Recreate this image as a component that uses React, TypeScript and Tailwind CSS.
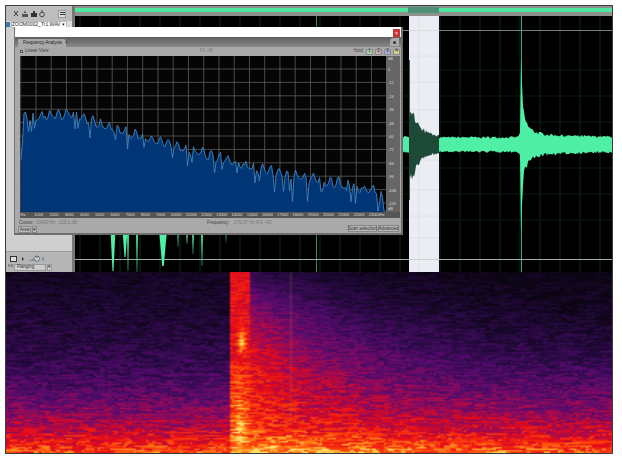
import { useEffect, useMemo, useRef } from "react";

function rng(seed: number) {
  let s = seed;
  return () => {
    s = (s * 16807) % 2147483647;
    return s / 2147483647;
  };
}

const green = "#4ff0a6";
const hz = ["Hz", "1000", "2000", "3000", "4000", "5000", "6000", "7000", "8000", "9000", "10000", "11000", "12000", "13000", "14000", "15000", "16000", "17000", "18000", "19000", "20000", "21000", "22000", "23000", "Hz"];
const db = ["dB", "0", "-12", "-24", "-36", "-48", "-60", "-72", "-84", "-96", "-108", "-120", "dB"];

// below-the-dialog peaks: x, width, tip y
const lowerPeaks = [
  [113, 5, 271], [125, 5, 257], [128, 2, 271], [137, 2, 272], [163, 8, 266],
  [178, 1.5, 247], [187, 2, 244], [193, 2, 254], [202, 2, 266], [226, 1, 243],
];

function wavePath(seed: number, from: number, to: number, amp: (x: number) => number) {
  const r = rng(seed);
  const top: string[] = [];
  const bottom: string[] = [];
  for (let x = from; x <= to; x += 1) {
    const a = amp(x);
    top.push(`${x},${(144 - a * (0.8 + r() * 0.3)).toFixed(1)}`);
    bottom.unshift(`${x},${(145 + a * (0.8 + r() * 0.3)).toFixed(1)}`);
  }
  return `M${top.join("L")}L${bottom.join("L")}Z`;
}

function Waveform() {
  const paths = useMemo(() => {
    const spike = (x: number) => {
      const d = x - 521;
      if (d < 0) return 7 + 8 * Math.exp(d / 1.5);
      return 7.5 + 58 * Math.exp(-d / 0.9) + 28 * Math.exp(-d / 5) + 6 * Math.exp(-d / 28);
    };
    const decay = (x: number) => {
      const d = x - 409;
      return 6 + 34 * Math.exp(-d / 7) * Math.min(1, 0.55 + d / 6) + 8 * Math.exp(-d / 22);
    };
    return {
      right: wavePath(7, 439, 612, spike),
      left: wavePath(11, 403, 409, () => 8),
      selected: wavePath(23, 409, 439, decay),
    };
  }, []);

  const verticals = Array.from({ length: 28 }, (_, i) => 80 + i * 20);
  return (
    <svg width="537" height="256" viewBox="75 16 537 256" className="block">
      <rect x="75" y="16" width="537" height="256" fill="#000" />
      {verticals.map((x) => (
        <line key={x} x1={x} y1="16" x2={x} y2="272" stroke="#0f2a1c" strokeWidth="1" />
      ))}
      {[70, 96, 122, 168, 194, 220].map((y) => (
        <line key={y} x1="75" y1={y} x2="612" y2={y} stroke="#0c1a14" strokeWidth="1" />
      ))}
      <line x1="316.5" y1="16" x2="316.5" y2="272" stroke="#2f8a62" strokeWidth="1" />
      <line x1="521.5" y1="16" x2="521.5" y2="272" stroke="#3aa878" strokeWidth="1" />
      <rect x="409" y="16" width="30" height="256" fill="#ecedf3" />
      {[56, 82, 110, 136, 160, 190, 216, 238].map((y) => (
        <line key={y} x1="409" y1={y} x2="439" y2={y} stroke="#e0e2e6" strokeWidth="1" />
      ))}
      <line x1="419" y1="16" x2="419" y2="272" stroke="#e0e2e6" strokeWidth="1" />
      <line x1="409.5" y1="60" x2="409.5" y2="200" stroke="#3b6a55" strokeWidth="1" />
      <line x1="75" y1="30.5" x2="612" y2="30.5" stroke="#77807b" strokeWidth="1" />
      <line x1="75" y1="259.5" x2="612" y2="259.5" stroke="#a6aca8" strokeWidth="1" />
      <line x1="409" y1="30.5" x2="439" y2="30.5" stroke="#dcdee2" strokeWidth="1" />
      <line x1="409" y1="259.5" x2="439" y2="259.5" stroke="#cfd1d5" strokeWidth="1" />
      <path d={paths.right} fill={green} />
      <path d={paths.left} fill={green} />
      <path d={paths.selected} fill="#1d4a37" />
      {lowerPeaks.map(([x, w, tip]) => (
        <path key={x} d={`M${x - w / 2},230L${x + w / 2},230L${x + w * 0.1},${tip}L${x - w * 0.1},${tip}Z`} fill={green} />
      ))}
    </svg>
  );
}

function Spectrum() {
  const { fill, stroke } = useMemo(() => {
    const r = rng(91);
    const env: [number, number][] = [
      [21, 132], [24, 113], [40, 111], [75, 109], [100, 120], [150, 134], [200, 148],
      [250, 162], [300, 172], [350, 181], [378, 187], [384, 198], [386, 208],
    ];
    const level = (x: number) => {
      for (let i = 1; i < env.length; i += 1) {
        if (x <= env[i][0]) {
          const [x0, y0] = env[i - 1];
          const [x1, y1] = env[i];
          return y0 + ((y1 - y0) * (x - x0)) / (x1 - x0);
        }
      }
      return 208;
    };
    const pts: string[] = [];
    for (let x = 21; x <= 386; x += 1.5) {
      const comb = Math.abs(Math.sin(x / 2.7 + r() * 0.6));
      const dip = r() > 0.86 ? 8 + r() * 14 : 0;
      const y = level(x) + comb * 10 + r() * 3 + dip - 3;
      pts.push(`${x},${Math.min(y, 211).toFixed(1)}`);
    }
    return { stroke: `M${pts.join("L")}`, fill: `M21,212L${pts.join("L")}L386,212Z` };
  }, []);

  return (
    <svg width="366" height="156" viewBox="20 56 366 156" className="block">
      <rect x="20" y="56" width="366" height="156" fill="#050505" />
      {Array.from({ length: 12 }, (_, i) => 69 + i * 13.4).map((y) => (
        <line key={y} x1="20" y1={y} x2="386" y2={y} stroke="#5c5c5c" strokeWidth="0.8" />
      ))}
      {Array.from({ length: 24 }, (_, i) => 20.7 + i * 15.25).map((x) => (
        <line key={x} x1={x} y1="56" x2={x} y2="212" stroke="#5c5c5c" strokeWidth="0.8" />
      ))}
      <path d={fill} fill="#003676" />
      <path d={stroke} fill="none" stroke="#3f86c4" strokeWidth="0.9" />
    </svg>
  );
}

function colour(v: number): [number, number, number] {
  const stops: [number, number, number, number][] = [
    [0, 10, 5, 16],
    [0.16, 36, 10, 62],
    [0.34, 84, 12, 110],
    [0.5, 150, 10, 90],
    [0.66, 232, 12, 24],
    [0.8, 255, 70, 10],
    [0.92, 255, 170, 40],
    [1, 255, 225, 110],
  ];
  const c = Math.min(1, Math.max(0, v));
  for (let i = 1; i < stops.length; i += 1) {
    if (c <= stops[i][0]) {
      const a = stops[i - 1];
      const b = stops[i];
      const k = (c - a[0]) / (b[0] - a[0]);
      return [a[1] + (b[1] - a[1]) * k, a[2] + (b[2] - a[2]) * k, a[3] + (b[3] - a[3]) * k];
    }
  }
  return [255, 225, 110];
}

function Spectrogram() {
  const ref = useRef<HTMLCanvasElement>(null);
  useEffect(() => {
    const ctx = ref.current?.getContext("2d");
    if (!ctx) return;
    const r = rng(1234);
    const W = 303;
    const H = 120;
    for (let y = 0; y < H; y += 1) {
      const t = y / H;
      let n = r();
      for (let x = 0; x < W; x += 1) {
        if (r() > 0.62) n = r();
        const px = x * 2 + 6;
        const d = px - 246;
        let v = 0.06 + 0.25 * t + 0.5 * t ** 3.5;
        if (px > 300) v -= 0.05 * Math.min(1, (px - 300) / 200) * (1 - t);
        if (px >= 231) {
          // energy left after the transient, ringing to the right
          const tail = Math.exp(-Math.max(0, d) / (60 + 110 * t));
          v += tail * (0.18 + 0.28 * Math.sin(Math.PI * Math.min(1, t * 1.15)));
        }
        if (px >= 230 && px <= 248) {
          const wide = Math.max(0, 1 - Math.abs(px - 239) / (5 + 7 * t));
          let hot = 0.66;
          if (t > 0.5) hot = 0.7 + 0.32 * ((t - 0.5) / 0.5) * (0.3 + 0.7 * wide);
          const blob = Math.exp(-(((t - 0.38) / 0.07) ** 2) - ((px - 241) / 4) ** 2) * 0.3;
          v = Math.max(v, hot + blob);
        }
        v += (n - 0.5) * (0.12 + 0.16 * t);
        const [a, b, c] = colour(v);
        ctx.fillStyle = `rgb(${a | 0},${b | 0},${c | 0})`;
        ctx.fillRect(x, y, 1, 1);
      }
    }
    ctx.fillStyle = "rgba(190,130,80,0.3)";
    ctx.fillRect(142, 0, 0.6, 98);
  }, []);
  return <canvas ref={ref} width={303} height={120} className="block h-[181px] w-[606px]" />;
}

function HoldButton({ n, color }: { n: string; color: string }) {
  return (
    <span className={`flex h-[6px] w-[7px] items-center justify-center border border-[#8a8a8a] text-[4.5px] leading-none text-[#333] ${color}`}>
      {n}
    </span>
  );
}

function FrequencyAnalysis() {
  return (
    <div className="absolute left-[9px] top-[21px] flex h-[208px] w-[388px] flex-col border-r-2 border-b-2 border-[#6d6d6d] bg-[#a9a9a9] shadow-[-1px_0_0_#777]">
      <div className="flex h-[10px] shrink-0 items-start justify-end bg-white">
        <span className="mr-[1px] mt-[2px] flex h-[8px] w-[7px] items-center justify-center bg-[#c8323a] text-[5px] leading-none text-white">×</span>
      </div>
      <div className="relative flex h-[10px] shrink-0 items-end bg-gradient-to-b from-[#5f5f5f] to-[#8a8a8a] pl-[3px]">
        <div className="flex h-[8px] w-[48px] items-center gap-[3px] rounded-tr-[3px] bg-[#a9a9a9] pl-[5px] text-[4.5px] text-[#222]">
          <span className="whitespace-nowrap">Frequency Analysis</span>
          <span>×</span>
        </div>
        <span className="absolute right-[2px] top-[1px] flex h-[8px] w-[9px] items-center justify-center rounded-tl-[4px] bg-[#a9a9a9]">
          <span className="h-[3px] w-[3px] rounded-full bg-[#333]" />
        </span>
      </div>
      <div className="flex h-[9px] shrink-0 items-center pl-[5px] pr-[1px] text-[4.5px] text-[#444]">
        <span className="mr-[2px] h-[3px] w-[3px] border border-[#555] bg-[#ddd]" />
        <span className="w-[175px] whitespace-nowrap">Linear View</span>
        <span className="whitespace-nowrap text-[#777]">F1 -45</span>
        <span className="ml-auto mr-[2px]">Hold:</span>
        <div className="flex gap-[2px]">
          <HoldButton n="1" color="bg-[#a6cfa6]" />
          <HoldButton n="2" color="bg-[#d2a9b0]" />
          <HoldButton n="3" color="bg-[#aaaad8]" />
          <HoldButton n="4" color="bg-[#cfd08c]" />
        </div>
      </div>
      <div className="ml-[5px] flex h-[162px] w-[380px] shrink-0 flex-col">
        <div className="flex h-[156px]">
          <Spectrum />
          <div className="relative w-[14px] bg-[#666] text-[4px] leading-none text-[#ddd]">
            {db.map((label, i) => (
              <span key={i} className="absolute left-[2px] whitespace-nowrap" style={{ top: i === 0 ? 1 : i === 12 ? 151 : 12 + (i - 1) * 13.4 }}>
                {label}
              </span>
            ))}
          </div>
        </div>
        <div className="relative h-[6px] w-[380px] bg-[#555] text-[4px] leading-[6px] text-[#ddd]">
          {hz.map((label, i) => (
            <span key={i} className="absolute -translate-x-1/2 whitespace-nowrap" style={{ left: i === 24 ? 362 : 3 + i * 15.25 + (i === 0 ? 0 : 0.5) }}>
              {label}
            </span>
          ))}
        </div>
      </div>
      <div className="relative flex-1 whitespace-nowrap text-[4.5px] leading-[5px] text-[#555]">
        <span className="absolute left-[4px] top-[2px] text-[#444]">Cursor:</span>
        <span className="absolute left-[21px] top-[2px] text-[#777]">10400 Hz, -115.1 dB</span>
        <span className="absolute left-[192px] top-[2px] text-[#444]">Frequency:</span>
        <span className="absolute left-[219px] top-[2px] text-[#777]">170.07 Hz (F3 -45)</span>
        <div className="absolute left-[3px] top-[8px] flex h-[7px] items-center gap-[1px] text-[#333]">
          <span className="flex h-[7px] w-[13px] items-center justify-center border border-[#888] bg-[#bbb]">Area</span>
          <span className="flex h-[7px] w-[5px] items-center justify-center border border-[#888] bg-[#bbb]">▾</span>
        </div>
        <div className="absolute right-[2px] top-[7px] flex gap-[1px] text-[#333]">
          <span className="flex h-[7px] w-[29px] items-center justify-center border border-[#888] bg-[#b5b5b5]">Scan selection</span>
          <span className="flex h-[7px] w-[21px] items-center justify-center border border-[#888] bg-[#b5b5b5]">Advanced</span>
        </div>
      </div>
    </div>
  );
}

function ToolIcons() {
  return (
    <svg width="32" height="9" viewBox="0 0 32 9" className="ml-[7px]">
      <path d="M1 2l4 5M5 2L1 7" stroke="#333" strokeWidth="1" fill="none" />
      <path d="M9 8V5h6v3zM10.5 4L12 1.5 13.5 4z" fill="#555" />
      <path d="M18 8V4h2V2h2v2h2v4z" fill="#333" />
      <circle cx="29" cy="5.5" r="2.3" fill="none" stroke="#444" />
      <path d="M29 1v2" stroke="#444" />
    </svg>
  );
}

function SidePanel() {
  return (
    <div className="flex h-[266px] w-[66px] shrink-0 flex-col bg-[#cfcfcf]">
      <div className="flex h-[15px] shrink-0 items-center bg-[#bdbdbd]">
        <ToolIcons />
        <span className="ml-[13px] flex h-[8px] w-[8px] flex-col items-center justify-center gap-[1px] border border-[#999] bg-[#ddd]">
          <span className="h-[1px] w-[5px] bg-[#333]" />
          <span className="h-[1px] w-[5px] bg-[#333]" />
        </span>
      </div>
      <div className="flex h-[6px] shrink-0 items-center gap-[1px] bg-[#dcdcdc] text-[5px] leading-none text-[#222]">
        <span className="h-[5px] w-[4px] bg-[#3c78b8]" />
        <span className="whitespace-nowrap border border-[#bbb] bg-white pr-[1px]">ZOOM0002_Tr1.WAV ▾</span>
      </div>
      <div className="flex-1" />
      <div className="flex h-[21px] shrink-0 flex-col border-t border-[#999] bg-[#b5b5b5]">
        <div className="flex h-[12px] items-center gap-[3px] pl-[4px] pt-[1px]">
          <span className="h-[6px] w-[7px] border border-[#333] bg-[#ddd]" />
          <span className="ml-[2px] h-0 w-0 border-y-[2px] border-l-[2px] border-y-transparent border-l-[#333]" />
          <svg width="17" height="7" viewBox="0 0 17 7" className="ml-[2px]">
            <path d="M0 6h5V3z" fill="#888" />
            <circle cx="8" cy="3.6" r="2.6" fill="#ddd" stroke="#444" strokeWidth="0.7" />
            <path d="M8 1v3" stroke="#444" strokeWidth="0.7" />
            <path d="M14 2v4" stroke="#3c78b8" />
          </svg>
        </div>
        <div className="flex h-[8px] items-start gap-[1px] overflow-hidden pl-[2px] text-[4.5px] leading-none text-[#333]">
          <span>Fx</span>
          <span className="flex h-[7px] w-[32px] items-center justify-between border border-[#999] bg-[#ccc] px-[2px]">
            Flanging
          </span>
          <span className="flex h-[7px] w-[5px] items-center justify-center border border-[#999] bg-[#ccc]">▾</span>
        </div>
      </div>
    </div>
  );
}

export default function App() {
  return (
    <div className="h-[461px] w-[622px] overflow-hidden bg-white pl-[5px] pt-[5px] font-['Liberation_Sans',sans-serif]">
      <div className="relative flex h-[449px] w-[608px] flex-col overflow-hidden border border-[#3c3c3c] blur-[0.4px]">
        <div className="flex h-[266px] shrink-0">
          <SidePanel />
          <div className="w-[3px] shrink-0 bg-[#777]" />
          <div className="flex w-[537px] shrink-0 flex-col">
            <div className="relative h-[10px] shrink-0 bg-[#8f918f]">
              <div className="absolute inset-x-0 top-[2px] h-[4px] bg-[#4fe6a2]" />
              <div className="absolute left-[333px] top-[1px] h-[6px] w-[31px] bg-[#4e8e74]" />
            </div>
            <Waveform />
          </div>
        </div>
        <Spectrogram />
        <FrequencyAnalysis />
      </div>
    </div>
  );
}
